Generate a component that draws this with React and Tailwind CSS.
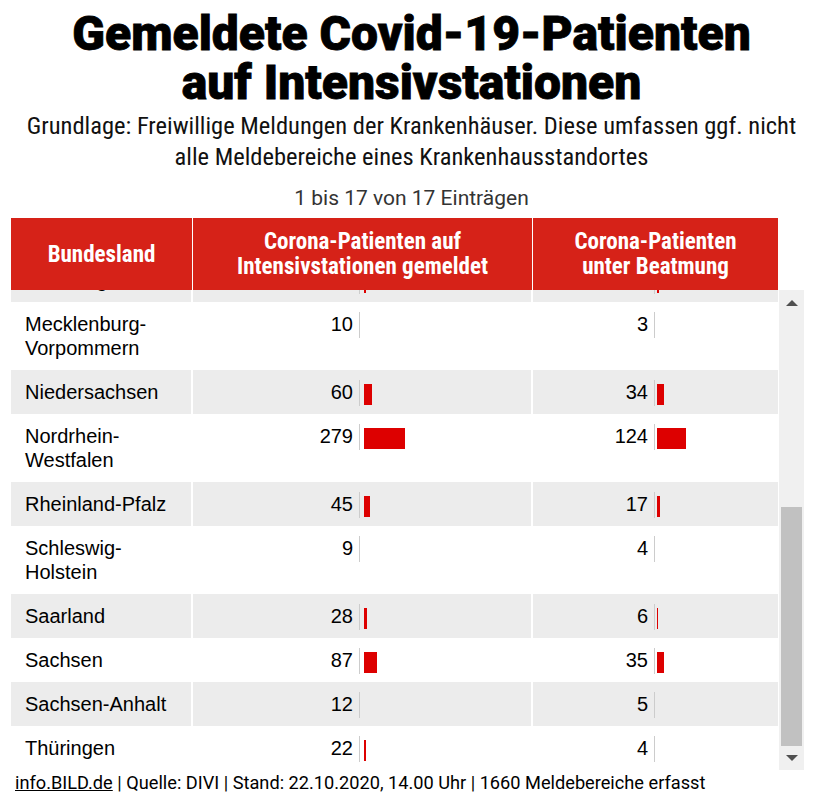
import React from "react";

// rows in table order (scrolled to the bottom); wa / wb = bar widths in px
const rows = [
  { name: "Hamburg", a: 24, b: 14, wa: 2, wb: 2 },
  { name: "Mecklenburg-Vorpommern", a: 10, b: 3, wa: 0, wb: 0 },
  { name: "Niedersachsen", a: 60, b: 34, wa: 8, wb: 7 },
  { name: "Nordrhein-Westfalen", a: 279, b: 124, wa: 41, wb: 29 },
  { name: "Rheinland-Pfalz", a: 45, b: 17, wa: 6, wb: 3 },
  { name: "Schleswig-Holstein", a: 9, b: 4, wa: 0, wb: 0 },
  { name: "Saarland", a: 28, b: 6, wa: 3, wb: 1 },
  { name: "Sachsen", a: 87, b: 35, wa: 13, wb: 7 },
  { name: "Sachsen-Anhalt", a: 12, b: 5, wa: 0, wb: 0 },
  { name: "Thüringen", a: 22, b: 4, wa: 2, wb: 0 },
];

const splitName = (name) => {
  // long names wrap after the hyphen like in the original table
  if (name.length > 16 && name.includes("-")) {
    const i = name.indexOf("-");
    return [name.slice(0, i + 1), name.slice(i + 1)];
  }
  return [name];
};

const ValueCell = ({ value, width, numWidth, barGap, bg }) => (
  <div className={`${bg} pt-[10px] pb-[10px]`}>
    <div className="flex items-start h-[24px]">
      <div className={`${numWidth} text-right shrink-0`}>{value}</div>
      <div className="ml-[6px] w-px h-[26px] bg-[#cccccc] shrink-0" />
      {width > 0 && (
        <div className={`${barGap} mt-[4px] h-[21px] bg-[#dd0000] shrink-0`} style={{ width }} />
      )}
    </div>
  </div>
);

const Row = ({ row, striped }) => {
  const bg = striped ? "bg-[#ececec]" : "bg-white";
  const lines = splitName(row.name);
  return (
    <div className="grid grid-cols-[180px_338px_245px] gap-x-[2px]">
      <div className={`${bg} pl-[14px] pt-[10px] pb-[10px]`}>
        {lines.map((l) => (
          <div key={l}>{l}</div>
        ))}
      </div>
      <ValueCell value={row.a} width={row.wa} numWidth="w-[160px]" barGap="ml-[4px]" bg={bg} />
      <ValueCell value={row.b} width={row.wb} numWidth="w-[115px]" barGap="ml-[2px]" bg={bg} />
    </div>
  );
};

const ScrollBar = () => (
  <div className="w-[25px] h-[480px] bg-[#f0f0f0] flex flex-col">
    <div className="h-[17px] flex justify-center pt-[10px]">
      <div className="w-0 h-0 border-l-[6px] border-r-[6px] border-b-[6px] border-l-transparent border-r-transparent border-b-[#505050]" />
    </div>
    <div className="flex-1 flex flex-col justify-end pl-[2px] pr-[2px]">
      <div className="h-[239px] bg-[#c1c1c1]" />
    </div>
    <div className="h-[24px] flex justify-center pt-[9px]">
      <div className="w-0 h-0 border-l-[6px] border-r-[6px] border-t-[6px] border-l-transparent border-r-transparent border-t-[#505050]" />
    </div>
  </div>
);

export default function App() {
  return (
    <div className="w-[823px] h-[801px] bg-white overflow-hidden text-black">
      <h1 className="pt-[9px] text-center font-['Roboto',sans-serif] font-black text-[48px] leading-[49px] [-webkit-text-stroke:0.8px_black]">
        Gemeldete Covid-19-Patienten
        <br />
        auf Intensivstationen
      </h1>
      <p className="mt-[3px] text-center font-['Roboto',sans-serif] [font-stretch:75%] text-[24.5px] leading-[31px] text-[#111111]">
        Grundlage: Freiwillige Meldungen der Krankenhäuser. Diese umfassen ggf. nicht
        <br />
        alle Meldebereiche eines Krankenhausstandortes
      </p>
      <div className="mt-[12px] text-center font-['Roboto',sans-serif] text-[21px] leading-[28px] text-[#333333]">
        1 bis 17 von 17 Einträgen
      </div>

      <div className="mt-[6px] ml-[11px] w-[793px]">
        <div className="grid grid-cols-[181px_339px_245px] gap-x-px w-[767px] font-['Roboto',sans-serif] [font-stretch:75%] font-bold text-[23px] leading-[25px] text-white">
          <div className="h-[72px] bg-[#d62218] flex items-center justify-center text-center">Bundesland</div>
          <div className="h-[72px] bg-[#d62218] flex items-center justify-center text-center">
            Corona-Patienten auf
            <br />
            Intensivstationen gemeldet
          </div>
          <div className="h-[72px] bg-[#d62218] flex items-center justify-center text-center">
            Corona-Patienten
            <br />
            unter Beatmung
          </div>
        </div>

        <div className="flex gap-x-px">
          <div className="w-[767px] h-[480px] overflow-hidden flex flex-col justify-end font-['Liberation_Sans',Arial,sans-serif] text-[20px] leading-[24px] text-black">
            {rows.map((r, i) => (
              <Row key={r.name} row={r} striped={(rows.length - 1 - i) % 2 === 1} />
            ))}
          </div>
          <ScrollBar />
        </div>
      </div>

      <div className="pl-[15px] pt-px font-['Roboto',sans-serif] text-[18.2px] leading-[24px] text-black">
        <span className="underline">info.BILD.de</span> | Quelle: DIVI | Stand: 22.10.2020, 14.00 Uhr | 1660 Meldebereiche erfasst
      </div>
    </div>
  );
}
